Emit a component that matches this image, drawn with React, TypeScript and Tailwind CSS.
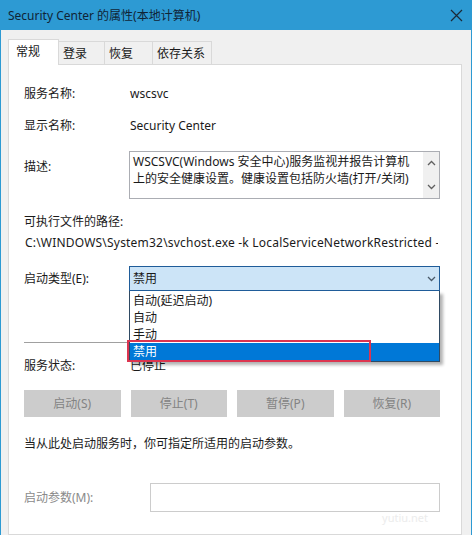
import React from "react";

const font = { fontFamily: '"Noto Sans", "Noto Sans CJK SC", sans-serif' };

const Chevron = ({ up = false, className = "" }: { up?: boolean; className?: string }) => (
  <svg width="9" height="6" viewBox="0 0 9 6" className={className}>
    <path
      d={up ? "M1 5 L4.5 1.5 L8 5" : "M1 1 L4.5 4.5 L8 1"}
      fill="none"
      stroke="currentColor"
      strokeWidth="1.3"
    />
  </svg>
);

const Row = ({ label, children, className = "" }: { label: string; children?: React.ReactNode; className?: string }) => (
  <div className={`flex items-center h-5 ${className}`}>
    <div className="w-[106px] shrink-0">{label}</div>
    <div>{children}</div>
  </div>
);

const App = () => {
  return (
    <div className="w-[472px] h-[535px] overflow-hidden bg-[#f0f0f0] border-x border-[#2d9ad3] text-[12px] text-[#1a1a1a] flex flex-col" style={font}>
      {/* Title bar */}
      <div className="h-[30px] shrink-0 bg-[#2d9ad3] flex items-center justify-between pl-[8px] pr-[9px] -mx-px">
        <span className="text-[12px] text-[#102436] pt-[2px]">Security Center 的属性(本地计算机)</span>
        <svg width="13" height="13" viewBox="0 0 13 13">
          <path d="M1 1 L12 12 M12 1 L1 12" stroke="#1b2a38" strokeWidth="1.2" />
        </svg>
      </div>

      {/* Tabs */}
      <div className="flex items-end pl-[7px] pt-[9px] h-[34px] shrink-0">
        <div className="relative z-10 w-[51px] h-[26px] -mb-px bg-white border border-b-0 border-[#d9d9d9] pl-[7px] pt-[3px]">常规</div>
        <div className="w-[46px] h-[23px] border-t border-r border-[#d9d9d9] pl-[4px] pt-[3px]">登录</div>
        <div className="w-[48px] h-[23px] border-t border-r border-[#d9d9d9] pl-[4px] pt-[3px]">恢复</div>
        <div className="w-[59px] h-[23px] border-t border-r border-[#d9d9d9] pl-[4px] pt-[3px]">依存关系</div>
      </div>

      {/* Panel */}
      <div className="ml-[7px] mr-[9px] flex-1 bg-white border border-[#d9d9d9] pl-[15px] pr-[20px] flex flex-col">
        <Row label="服务名称:" className="mt-[19px]">wscsvc</Row>
        <Row label="显示名称:" className="mt-3">Security Center</Row>

        <div className="flex mt-[15px]">
          <div className="w-[105px] shrink-0 mt-[6px] h-5 flex items-center">描述:</div>
          <div className="w-[311px] h-[48px] border border-[#abadb3] flex">
            <div className="flex-1 pl-[3px] pt-[1px] leading-[17px]">
              WSCSVC(Windows 安全中心)服务监视并报告计算机
              <br />
              上的安全健康设置。健康设置包括防火墙(打开/关闭)
            </div>
            <div className="w-[16px] bg-[#f0f0f0] flex flex-col items-center justify-between py-[8px] text-[#606060]">
              <Chevron up />
              <Chevron />
            </div>
          </div>
        </div>

        <div className="mt-[13px] h-5 flex items-center">可执行文件的路径:</div>
        <div className="mt-[1px] h-5 flex items-center pl-px whitespace-nowrap overflow-hidden w-[414px] tracking-[0.2px]">
          C:\WINDOWS\System32\svchost.exe -k LocalServiceNetworkRestricted -p
        </div>

        {/* Startup type */}
        <div className="flex items-center mt-[13px] h-[25px]">
          <div className="w-[105px] shrink-0">启动类型(E):</div>
          <div className="relative w-[311px] h-[25px]">
            <div className="h-full bg-[#cce4f7] border border-[#1f5c99] flex items-center justify-between pl-[3px] pr-[3px]">
              <span>禁用</span>
              <Chevron className="text-[#4a5a6a]" />
            </div>
            <div className="absolute z-20 left-0 top-full w-full bg-white border border-[#2f4a63] border-t-0 pt-px shadow-[3px_3px_3px_rgba(0,0,0,0.3)]">
              <div className="h-[17px] flex items-center pl-[3px]">自动(延迟启动)</div>
              <div className="h-[17px] flex items-center pl-[3px]">自动</div>
              <div className="h-[17px] flex items-center pl-[3px]">手动</div>
              <div className="h-[18px] flex items-center pl-[3px] bg-[#0078d7] text-white">禁用</div>
              <div className="absolute -left-[3px] top-[49px] w-[244px] h-[22px] border-2 border-[#dc3550]" />
            </div>
          </div>
        </div>

        <div className="mt-[51px] h-px bg-[#a0a0a0] w-[416px]" />

        <Row label="服务状态:" className="mt-[13px]">已停止</Row>

        <div className="mt-[14px] grid grid-cols-4 gap-[10px] w-[416px] text-[#838383]">
          <div className="h-[27px] bg-[#cccccc] flex items-center justify-center">启动(S)</div>
          <div className="h-[27px] bg-[#cccccc] flex items-center justify-center">停止(T)</div>
          <div className="h-[27px] bg-[#cccccc] flex items-center justify-center">暂停(P)</div>
          <div className="h-[27px] bg-[#cccccc] flex items-center justify-center">恢复(R)</div>
        </div>

        <div className="mt-[17px] h-5 flex items-center">当从此处启动服务时，你可指定所适用的启动参数。</div>

        <div className="flex items-center mt-[29px]">
          <div className="w-[126px] shrink-0 text-[#8a8a8a]">启动参数(M):</div>
          <div className="w-[290px] h-[29px] border border-[#cccccc]" />
        </div>
        <div className="w-[416px] flex justify-end pr-[12px] text-[11px] leading-[12px] text-[#ececec]">yutiu.net</div>
      </div>
    </div>
  );
};

export default App;
